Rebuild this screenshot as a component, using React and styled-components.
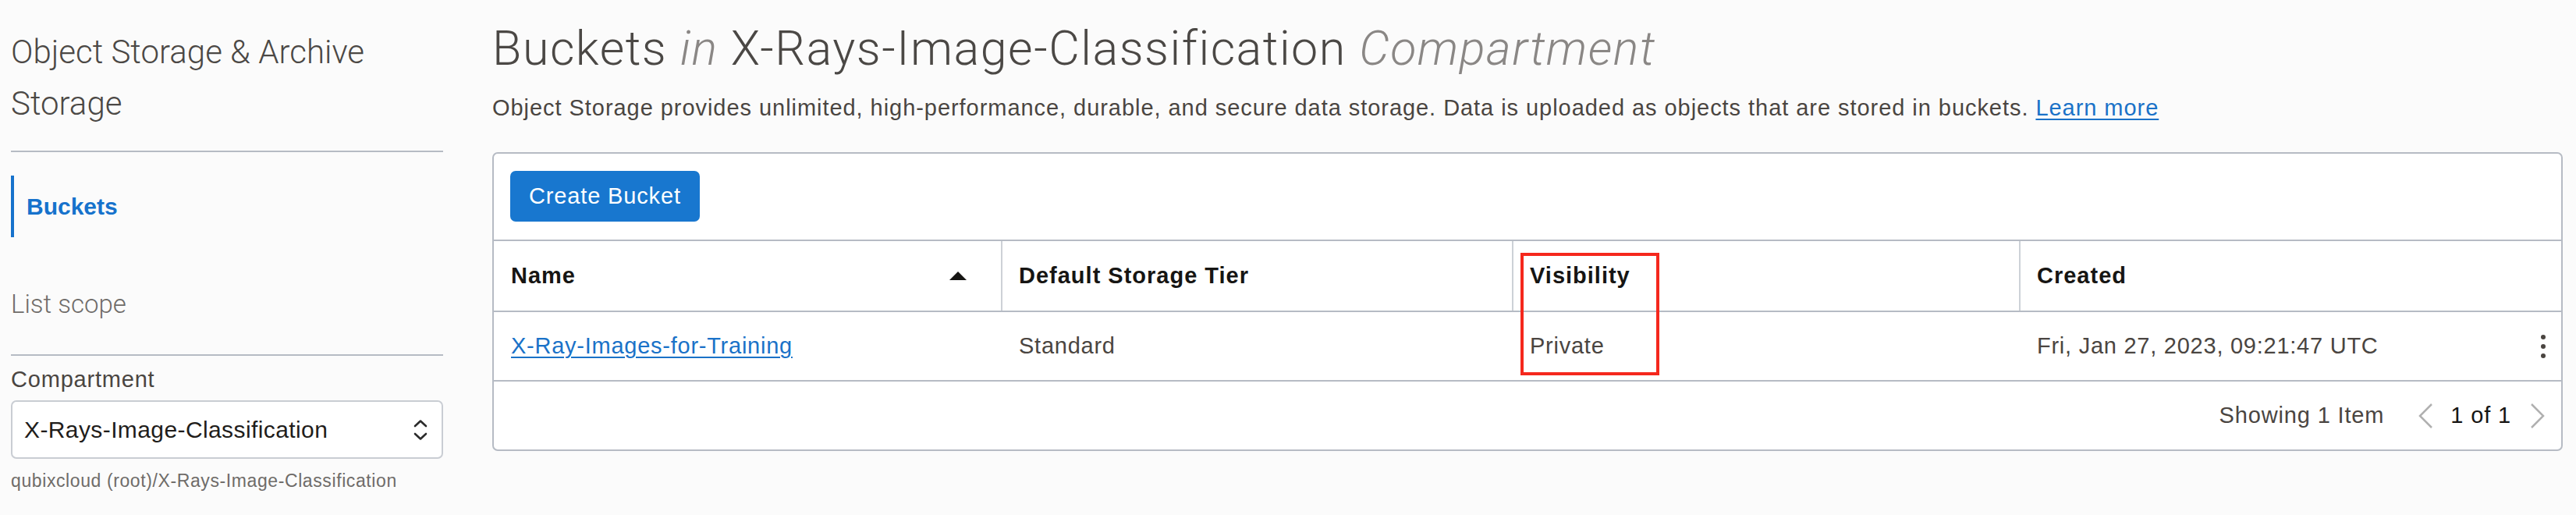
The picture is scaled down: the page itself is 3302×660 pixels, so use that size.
import React from "react";
import styled, { createGlobalStyle } from "styled-components";

const GlobalStyle = createGlobalStyle`
	html, body {
		margin: 0;
		overflow: hidden;
	}
	body {
		background: #fbfbfb;
		font-family: "Liberation Sans", Arial, sans-serif;
		color: #4a4541;
	}
`;

const Page = styled.div`
	display: flex;
	gap: 63px;
	height: 660px;
	padding: 0 17px 0 14px;
	box-sizing: border-box;
	overflow: hidden;
`;

const Sidebar = styled.aside`
	width: 554px;
	flex-shrink: 0;
	padding-top: 34px;
`;

const SideTitle = styled.h2`
	margin: 0;
	font-family: Roboto, "Liberation Sans", sans-serif;
	font-weight: 300;
	font-size: 42px;
	line-height: 66px;
	color: #4b4845;
`;

const Divider = styled.hr`
	margin: ${(p) => p.$top}px 0 0;
	border: 0;
	height: 2px;
	background: #b6bbc4;
`;

const NavItem = styled.a`
	display: flex;
	align-items: center;
	height: 79px;
	margin-top: 30px;
	padding-left: 16px;
	border-left: 4px solid #1672cc;
	font-size: 30px;
	font-weight: 700;
	color: #1672cc;
	text-decoration: none;
`;

const SideSubtitle = styled.div`
	margin-top: 66px;
	font-family: Roboto, "Liberation Sans", sans-serif;
	font-weight: 300;
	font-size: 33px;
	line-height: 40px;
	color: #6f6c69;
`;

const FieldLabel = styled.label`
	display: block;
	margin-top: 14px;
	font-size: 29px;
	letter-spacing: 0.8px;
	line-height: 32px;
	color: #4a4541;
`;

const SelectBox = styled.div`
	display: flex;
	align-items: center;
	justify-content: space-between;
	height: 75px;
	margin-top: 11px;
	padding: 0 17px 0 15px;
	box-sizing: border-box;
	border: 2px solid #c9cdd3;
	border-radius: 7px;
	background: #fff;
	font-size: 30px;
	letter-spacing: 0.4px;
	color: #1f1d1b;
`;

const Helper = styled.div`
	margin-top: 15px;
	font-size: 23px;
	letter-spacing: 0.6px;
	line-height: 26px;
	color: #6f6c69;
`;

const Main = styled.main`
	flex: 1;
	padding-top: 26px;
`;

const Heading = styled.h1`
	margin: 0;
	font-family: Roboto, "Liberation Sans", sans-serif;
	font-weight: 300;
	font-size: 61px;
	letter-spacing: 1.5px;
	line-height: 72px;
	color: #4b4845;
	white-space: nowrap;
`;

const Muted = styled.em`
	color: #8a8785;
`;

const Description = styled.p`
	margin: 22px 0 0;
	font-size: 29px;
	letter-spacing: 0.95px;
	line-height: 36px;
	color: #4a4541;
	white-space: nowrap;
`;

const Link = styled.a`
	color: #1a72c8;
	text-decoration: underline;
	text-decoration-thickness: 2px;
	text-underline-offset: 4px;
`;

const Card = styled.section`
	margin-top: 39px;
	border: 2px solid #b6bbc4;
	border-radius: 7px;
	background: #fff;
	font-size: 29px;
	letter-spacing: 0.85px;
`;

const Toolbar = styled.div`
	display: flex;
	padding: 22px 21px 23px;
`;

const Button = styled.button`
	height: 65px;
	padding: 0 24px;
	border: 0;
	border-radius: 7px;
	background: #1877cf;
	color: #fff;
	font-family: "Liberation Sans", Arial, sans-serif;
	font-size: 29px;
	letter-spacing: 0.85px;
`;

const Row = styled.div`
	display: grid;
	grid-template-columns: 650px 655px 650px 1fr;
	height: ${(p) => p.$height}px;
	border-top: 2px solid #b6bbc4;
`;

const Cell = styled.div`
	position: relative;
	display: flex;
	align-items: center;
	justify-content: space-between;
	padding: 0 ${(p) => p.$padRight || 22}px 0 21px;
	border-left: 2px solid ${(p) => (p.$divider ? "#cdd1d7" : "transparent")};
	font-weight: ${(p) => (p.$head ? 700 : 400)};
	letter-spacing: ${(p) => (p.$head ? 1 : 0.75)}px;
	color: ${(p) => (p.$head ? "#161513" : "#4a4541")};
	&:first-child {
		border-left: 0;
		padding-left: 22px;
	}
`;

const SortArrow = styled.span`
	width: 0;
	height: 0;
	margin-right: 11px;
	border-left: 11px solid transparent;
	border-right: 11px solid transparent;
	border-bottom: 11px solid #161513;
`;

const Highlight = styled.div`
	position: absolute;
	left: 9px;
	top: 15px;
	width: 178px;
	height: 157px;
	box-sizing: border-box;
	border: 4px solid #f5281d;
	pointer-events: none;
	z-index: 2;
`;

const Kebab = styled.div`
	display: flex;
	flex-direction: column;
	gap: 6px;
	span {
		width: 6px;
		height: 6px;
		border-radius: 50%;
		background: #4a4541;
	}
`;

const Footer = styled.div`
	display: flex;
	align-items: center;
	justify-content: flex-end;
	height: 87px;
	padding-right: 20px;
	border-top: 2px solid #b6bbc4;
`;

const Count = styled.span`
	color: #4a4541;
	margin-right: 43px;
`;

const Pages = styled.span`
	color: #161513;
	margin: 0 24px 0 22px;
`;

const Chevron = ({ dir }) => (
	<svg width="20" height="32" viewBox="0 0 20 32">
		<path
			d={dir === "left" ? "M18 1 L3 16 L18 31" : "M2 1 L17 16 L2 31"}
			fill="none"
			stroke="#b0b0b0"
			strokeWidth="2.5"
		/>
	</svg>
);

const UpDown = () => (
	<svg width="20" height="28" viewBox="0 0 20 28">
		<path d="M3 9 L10 2.5 L17 9" fill="none" stroke="#2b2b2b" strokeWidth="2.6" strokeLinecap="round" strokeLinejoin="round" />
		<path d="M3 19 L10 25.5 L17 19" fill="none" stroke="#2b2b2b" strokeWidth="2.6" strokeLinecap="round" strokeLinejoin="round" />
	</svg>
);

export default function App() {
	return (
		<Page>
			<GlobalStyle />
			<Sidebar>
				<SideTitle>Object Storage &amp; Archive Storage</SideTitle>
				<Divider $top={27} />
				<NavItem href="#">Buckets</NavItem>
				<SideSubtitle>List scope</SideSubtitle>
				<Divider $top={44} />
				<FieldLabel>Compartment</FieldLabel>
				<SelectBox>
					X-Rays-Image-Classification
					<UpDown />
				</SelectBox>
				<Helper>qubixcloud (root)/X-Rays-Image-Classification</Helper>
			</Sidebar>
			<Main>
				<Heading>
					Buckets <Muted>in</Muted> X-Rays-Image-Classification <Muted>Compartment</Muted>
				</Heading>
				<Description>
					Object Storage provides unlimited, high-performance, durable, and secure data storage. Data is uploaded as
					objects that are stored in buckets. <Link href="#">Learn more</Link>
				</Description>
				<Card>
					<Toolbar>
						<Button>Create Bucket</Button>
					</Toolbar>
					<Row $height={89}>
						<Cell $head $padRight={33}>
							Name
							<SortArrow />
						</Cell>
						<Cell $head $divider>Default Storage Tier</Cell>
						<Cell $head $divider>
							Visibility
							<Highlight />
						</Cell>
						<Cell $head $divider>Created</Cell>
					</Row>
					<Row $height={87}>
						<Cell>
							<Link href="#">X-Ray-Images-for-Training</Link>
						</Cell>
						<Cell>Standard</Cell>
						<Cell>Private</Cell>
						<Cell $padRight={20}>
							Fri, Jan 27, 2023, 09:21:47 UTC
							<Kebab>
								<span />
								<span />
								<span />
							</Kebab>
						</Cell>
					</Row>
					<Footer>
						<Count>Showing 1 Item</Count>
						<Chevron dir="left" />
						<Pages>1 of 1</Pages>
						<Chevron dir="right" />
					</Footer>
				</Card>
			</Main>
		</Page>
	);
}
